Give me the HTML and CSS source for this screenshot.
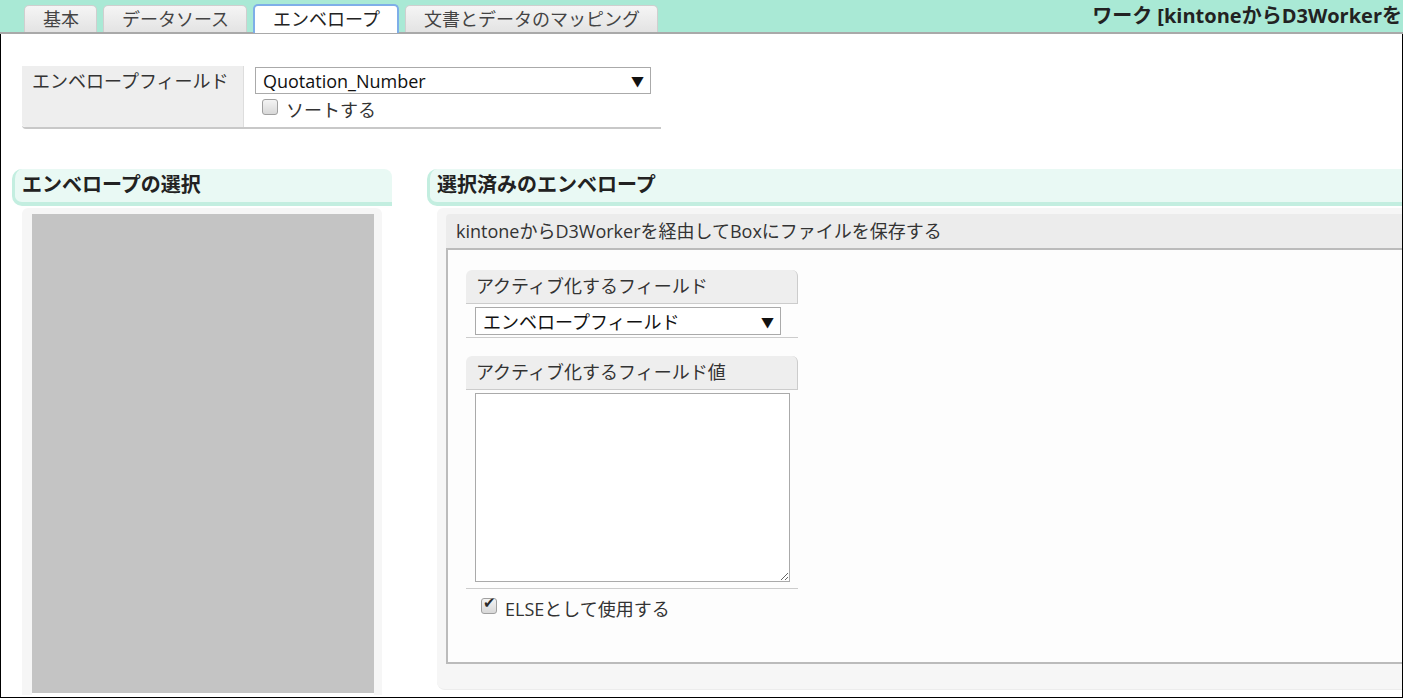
FILE: index.html
```html
<!DOCTYPE html>
<html lang="ja">
<head>
<meta charset="utf-8">
<title>エンベロープ</title>
<link rel="stylesheet" href="styles.css">
</head>
<body>
    <header class="topBar">
        <nav class="tabs">
            <div class="tab">基本</div>
            <div class="tab">データソース</div>
            <div class="tab active">エンベロープ</div>
            <div class="tab">文書とデータのマッピング</div>
        </nav>
        <div class="workTitle">ワーク [kintoneからD3Workerを</div>
    </header>

    <main class="page">
        <div class="fieldRow">
            <div class="fieldLabel">エンベロープフィールド</div>
            <div class="fieldValue">
                <div class="selectBox wide">
                    <span>Quotation_Number</span>
                    <span class="arrow">▼</span>
                </div>
                <label class="checkRow">
                    <input type="checkbox" class="check">
                    <span>ソートする</span>
                </label>
            </div>
        </div>

        <div class="columns">
            <section class="colLeft">
                <h2 class="secHead">エンベロープの選択</h2>
                <div class="panel panelLeft">
                    <div class="envList"></div>
                </div>
            </section>

            <section class="colRight">
                <h2 class="secHead">選択済みのエンベロープ</h2>
                <div class="panel panelRight">
                    <div class="envTitle">kintoneからD3Workerを経由してBoxにファイルを保存する</div>
                    <div class="envBody">
                        <div class="prop">
                            <div class="propHead">アクティブ化するフィールド</div>
                            <div class="propBody">
                                <div class="selectBox small">
                                    <span>エンベロープフィールド</span>
                                    <span class="arrow">▼</span>
                                </div>
                            </div>
                        </div>
                        <div class="prop second">
                            <div class="propHead">アクティブ化するフィールド値</div>
                            <div class="propBody tall">
                                <textarea class="valueArea"></textarea>
                            </div>
                        </div>
                        <label class="checkRow elseRow">
                            <input type="checkbox" class="check" checked>
                            <span>ELSEとして使用する</span>
                        </label>
                    </div>
                </div>
            </section>
        </div>
    </main>
</body>
</html>
```

FILE: styles.css
```css
* {
    box-sizing: border-box;
}

html, body {
    margin: 0;
    height: 100%;
}

body {
    font-family: "Open Sans", "Noto Sans CJK JP", sans-serif;
    font-size: 18px;
    color: #333333;
    background: #ffffff;
    overflow: hidden;
    display: flex;
    flex-direction: column;
}

/* top bar with tabs */
.topBar {
    display: flex;
    align-items: flex-end;
    height: 34px;
    background-color: #a9e9d5;
    border-bottom: 2px solid #a9a9a9;
    flex-shrink: 0;
}

.tabs {
    display: flex;
    align-items: flex-end;
    gap: 6px;
    padding-left: 24px;
    flex-shrink: 0;
}

.tab {
    height: 27px;
    line-height: 26px;
    padding: 0 17px 0 18px;
    border: 1px solid #cfcfcf;
    border-bottom: none;
    border-radius: 5px 5px 0 0;
    background: linear-gradient(#f5f5f5, #e3e3e3);
    color: #444444;
    white-space: nowrap;
}

.tab.active {
    height: 29px;
    margin-bottom: -1px;
    background: #ffffff;
    border: 2px solid #7eaee8;
    border-bottom: none;
    color: #222222;
    line-height: 26px;
}

.workTitle {
    margin-left: auto;
    align-self: center;
    white-space: nowrap;
    font-size: 20px;
    font-weight: bold;
    color: #222222;
    line-height: 26px;
    padding-right: 1px;
}

/* page body */
.page {
    flex: 1;
    border-left: 1px solid #000000;
    border-right: 1px solid #000000;
    border-bottom: 1px solid #000000;
    overflow: hidden;
}

.fieldRow {
    display: flex;
    width: 639px;
    margin: 32px 0 0 21px;
    border-bottom: 2px solid #c8c8c8;
    border-radius: 0 0 0 4px;
}

.fieldLabel {
    width: 222px;
    padding: 2px 10px;
    background-color: #eeeeee;
    border-right: 1px solid #dddddd;
    border-radius: 0 0 0 4px;
    line-height: 26px;
    color: #333333;
}

.fieldValue {
    flex: 1;
    padding: 1px 0 3px 11px;
}

.selectBox {
    display: flex;
    justify-content: space-between;
    align-items: center;
    height: 27px;
    padding: 0 6px 0 7px;
    border: 1px solid #aaaaaa;
    background: #ffffff;
    color: #111111;
}

.selectBox.wide {
    width: 396px;
}

.selectBox.small {
    width: 306px;
    height: 28px;
}

.arrow {
    font-size: 13px;
    color: #111111;
}

.checkRow {
    display: flex;
    align-items: center;
    gap: 8px;
    height: 30px;
    padding-left: 7px;
}

.check {
    appearance: none;
    -webkit-appearance: none;
    width: 16px;
    height: 16px;
    margin: 0;
    border: 1px solid #a0a0a0;
    border-radius: 3px;
    background: linear-gradient(#f4f4f4, #d8d8d8);
    position: relative;
    top: -2px;
}

.check:checked::after {
    content: "✔";
    position: absolute;
    left: 1px;
    top: -5px;
    font-size: 15px;
    color: #2a2a2a;
}

/* two columns */
.columns {
    display: flex;
    gap: 35px;
    margin-top: 40px;
    padding-left: 11px;
}

.colLeft {
    width: 380px;
    flex-shrink: 0;
}

.colRight {
    flex: 1;
    min-width: 0;
}

.secHead {
    margin: 0;
    height: 37px;
    padding: 1px 8px 0 7px;
    font-size: 20px;
    font-weight: bold;
    line-height: 30px;
    color: #222222;
    background-color: #e9f9f4;
    border-left: 3px solid #c3eee0;
    border-bottom: 4px solid #c3eee0;
    border-radius: 10px 8px 0 10px;
}

.colRight .secHead {
    border-radius: 10px 0 0 10px;
}

.panel {
    margin-top: 2px;
    background-color: #f6f6f6;
}

.panelLeft {
    margin: 2px 10px 0 10px;
    padding: 6px 8px 0 10px;
    border-radius: 6px 6px 0 0;
}

.envList {
    height: 481px;
    background-color: #c4c4c4;
    border-bottom: 2px solid #ffffff;
}

.panelRight {
    margin-left: 10px;
    padding: 6px 0 25px 9px;
    border-radius: 6px 0 0 8px;
    border-bottom: 1px solid #ececec;
}

.envTitle {
    height: 34px;
    padding-left: 10px;
    line-height: 34px;
    background-color: #ececec;
    border-radius: 4px 0 0 0;
    white-space: nowrap;
}

.envBody {
    height: 416px;
    padding: 20px 18px;
    background-color: #fdfdfd;
    border: 2px solid #bbbbbb;
    border-right: none;
}

.prop {
    width: 332px;
}

.prop.second {
    margin-top: 18px;
}

.propHead {
    height: 34px;
    padding-left: 10px;
    line-height: 32px;
    background-color: #eeeeee;
    border-right: 1px solid #cccccc;
    border-bottom: 1px solid #cccccc;
    border-radius: 6px 6px 0 0;
    white-space: nowrap;
}

.propBody {
    padding: 3px 9px 2px;
    border-bottom: 1px solid #cccccc;
}

.propBody.tall {
    padding: 3px 9px 6px;
}

.valueArea {
    display: block;
    width: 315px;
    height: 189px;
    margin: 0;
    border: 1px solid #aaaaaa;
    font-family: inherit;
    font-size: 16px;
    resize: both;
}

.elseRow {
    padding-left: 15px;
    margin-top: 5px;
    height: 28px;
}
```
